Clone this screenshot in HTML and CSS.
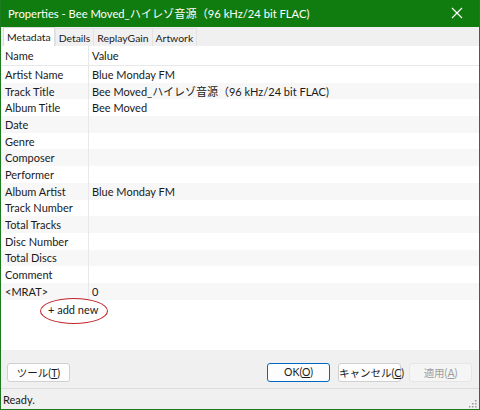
FILE: index.html
```html
<!DOCTYPE html>
<html lang="ja">
<head>
<meta charset="utf-8">
<title>Properties</title>
<link rel="stylesheet" href="styles.css">
</head>
<body>
<div class="window">
  <div class="titlebar">
    <span class="title">Properties - Bee Moved_ハイレゾ音源（96 kHz/24 bit FLAC)</span>
    <svg class="close" width="12" height="12" viewBox="0 0 12 12"><path d="M1 1 L11 11 M11 1 L1 11" stroke="#fff" stroke-width="1.2" fill="none"/></svg>
  </div>
  <div class="tabs">
    <div class="tab active">Metadata</div>
    <div class="tab">Details</div>
    <div class="tab">ReplayGain</div>
    <div class="tab">Artwork</div>
  </div>
  <div class="panel">
    <div class="row head"><div class="name">Name</div><div class="value">Value</div></div>
    <div class="row"><div class="name">Artist Name</div><div class="value">Blue Monday FM</div></div>
    <div class="row alt"><div class="name">Track Title</div><div class="value">Bee Moved_ハイレゾ音源（96 kHz/24 bit FLAC)</div></div>
    <div class="row"><div class="name">Album Title</div><div class="value">Bee Moved</div></div>
    <div class="row alt"><div class="name">Date</div><div class="value"></div></div>
    <div class="row"><div class="name">Genre</div><div class="value"></div></div>
    <div class="row alt"><div class="name">Composer</div><div class="value"></div></div>
    <div class="row"><div class="name">Performer</div><div class="value"></div></div>
    <div class="row alt"><div class="name">Album Artist</div><div class="value">Blue Monday FM</div></div>
    <div class="row"><div class="name">Track Number</div><div class="value"></div></div>
    <div class="row alt"><div class="name">Total Tracks</div><div class="value"></div></div>
    <div class="row"><div class="name">Disc Number</div><div class="value"></div></div>
    <div class="row alt"><div class="name">Total Discs</div><div class="value"></div></div>
    <div class="row"><div class="name">Comment</div><div class="value"></div></div>
    <div class="row alt"><div class="name">&lt;MRAT&gt;</div><div class="value">0</div></div>
    <div class="addrow"><span class="add">+ add new<span class="ring"></span></span></div>
  </div>
  <div class="footer">
    <button class="btn">ツール(<u>T</u>)</button>
    <div class="spacer"></div>
    <button class="btn default">OK(<u>O</u>)</button>
    <button class="btn">キャンセル(<u>C</u>)</button>
    <button class="btn disabled">適用(<u>A</u>)</button>
  </div>
  <div class="status">
    <span>Ready.</span>
    <svg class="grip" width="8" height="8" viewBox="0 0 8 8" fill="#9a9a9a"><rect x="6" y="0" width="1.5" height="1.5"/><rect x="3" y="3" width="1.5" height="1.5"/><rect x="6" y="3" width="1.5" height="1.5"/><rect x="0" y="6" width="1.5" height="1.5"/><rect x="3" y="6" width="1.5" height="1.5"/><rect x="6" y="6" width="1.5" height="1.5"/></svg>
  </div>
</div>
</body>
</html>
```
FILE: styles.css
```css
* { box-sizing: border-box; }
html, body { margin: 0; padding: 0; }
body {
  font-family: "Lato", "Noto Sans CJK JP", sans-serif;
  font-size: 11px;
  color: #1a1a1a;
  background: #fff;
}
.window {
  width: 480px;
  height: 410px;
  display: flex;
  flex-direction: column;
  border: 1px solid #1e7a1e;
  border-top: none;
  background: #f0f0f0;
  overflow: hidden;
}
.titlebar {
  height: 27px;
  flex: none;
  background: #107c10;
  color: #fff;
  display: flex;
  align-items: center;
  padding: 0 0 1px 7px;
  font-size: 11.2px;
}
.title { flex: 1; white-space: nowrap; }
.close { margin-right: 16px; }
.tabs {
  height: 19px;
  flex: none;
  display: flex;
  align-items: flex-end;
  padding-left: 2px;
  background: #f0f0f0;
  font-size: 10.4px;
}
.tab {
  height: 18px;
  padding: 0 3px;
  display: flex;
  align-items: center;
  border: 1px solid #e3e3e3;
  border-bottom: none;
  margin-left: -1px;
  background: #f0f0f0;
}
.tab.active {
  height: 19px;
  background: #fff;
  border-color: #dcdcdc;
  margin-left: 0;
  margin-right: 1px;
  padding: 0 3px;
}
.panel {
  flex: 1;
  background: #fff;
  display: flex;
  flex-direction: column;
}
.row {
  display: flex;
  height: 16.7px;
  flex: none;
  align-items: center;
}
.row.alt { background: #f7f7f7; }
.row.head {
  height: 20px;
  border-bottom: 1px solid #e8e8e8;
}
.name {
  width: 88px;
  padding-left: 4px;
  align-self: stretch;
  display: flex;
  align-items: center;
  border-right: 1px solid #e8e8e8;
  white-space: nowrap;
}
.value {
  padding-left: 3px;
  white-space: nowrap;
}
.addrow {
  height: 20px;
  flex: none;
  display: flex;
  align-items: center;
  padding-left: 47px;
}
.add { position: relative; }
.ring {
  position: absolute;
  left: -8px;
  top: -5px;
  width: 68px;
  height: 26px;
  border: 1.5px solid #c4262b;
  border-radius: 50%;
}
.footer {
  height: 39px;
  flex: none;
  display: flex;
  align-items: center;
  gap: 8px;
  padding: 6px 7px 0 6px;
  border-bottom: 1px solid #dcdcdc;
}
.spacer { flex: 1; }
.btn {
  font: inherit;
  font-size: 10.5px;
  width: 63px;
  height: 19px;
  padding: 0;
  white-space: nowrap;
  background: #fdfdfd;
  border: 1px solid #d0d0d0;
  border-radius: 3px;
  color: #1a1a1a;
}
.btn.default { border-color: #0067c0; }
.btn.disabled { background: #f5f5f5; border-color: #e6e6e6; color: #9d9d9d; }
.status {
  height: 20px;
  flex: none;
  display: flex;
  align-items: center;
  justify-content: space-between;
  padding: 0 2px 0 2px;
}
.grip { align-self: flex-end; margin-bottom: 1px; }
```
